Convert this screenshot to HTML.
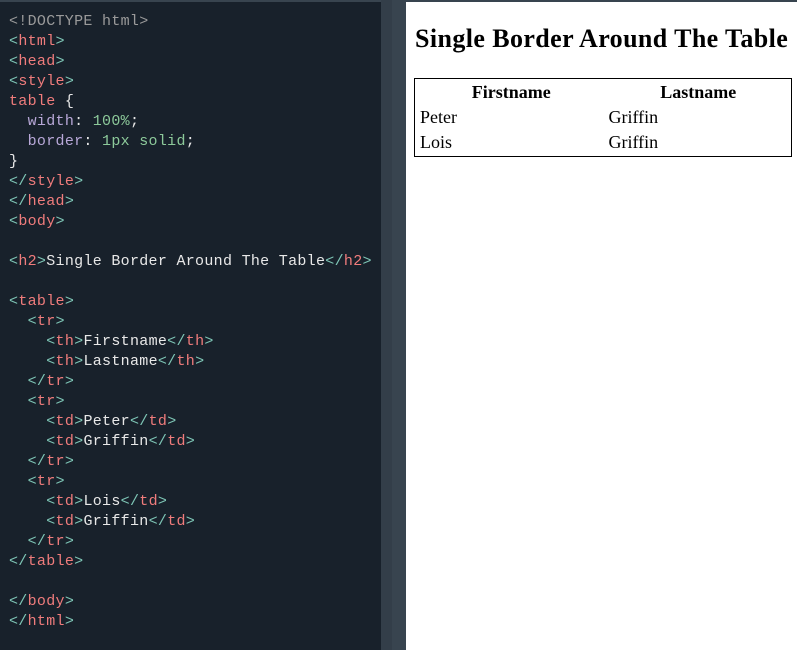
<!DOCTYPE html>
<html><head><style>
body{margin:0;width:797px;height:650px;overflow:hidden;background:#fff;position:relative}
#ed{position:absolute;left:0;top:2px;width:381px;height:648px;background:#18212b}
#top{position:absolute;left:0;top:0;width:797px;height:2px;background:#38444f}
#bar{position:absolute;left:381px;top:0;width:25px;height:650px;background:#38444f}
#bar2{position:absolute;left:381px;top:0;width:11px;height:650px;background:#333e49}
pre{margin:0;position:absolute;left:9px;top:12px;font:15px/20px "Liberation Mono",monospace;letter-spacing:0.3px;color:#e8e8e8}
.b{color:#7ec6b6}.t{color:#f07c7c}.g{color:#9a9a9a}.p{color:#b8a8d8}.v{color:#8cc99a}
#out{position:absolute;left:414px;top:0;width:378px;font-family:"Liberation Serif",serif}
h2{margin:25px 0 0;font-size:26px;line-height:28px;padding-left:1px;letter-spacing:0.4px;white-space:nowrap}
table{width:100%;border:1px solid #000;margin-top:25px;font-size:18px;border-spacing:2px}
th,td{padding:1px;line-height:21px}
td{text-align:left}
tr td:first-child{padding-left:3px}
</style></head><body>
<div id="top"></div><div id="ed"></div><div id="bar"></div><div id="bar2"></div>
<pre><span class="g">&lt;!DOCTYPE html&gt;</span>
<span class="b">&lt;</span><span class="t">html</span><span class="b">&gt;</span>
<span class="b">&lt;</span><span class="t">head</span><span class="b">&gt;</span>
<span class="b">&lt;</span><span class="t">style</span><span class="b">&gt;</span>
<span class="t">table</span> {
  <span class="p">width</span>: <span class="v">100%</span>;
  <span class="p">border</span>: <span class="v">1px solid</span>;
}
<span class="b">&lt;/</span><span class="t">style</span><span class="b">&gt;</span>
<span class="b">&lt;/</span><span class="t">head</span><span class="b">&gt;</span>
<span class="b">&lt;</span><span class="t">body</span><span class="b">&gt;</span>

<span class="b">&lt;</span><span class="t">h2</span><span class="b">&gt;</span>Single Border Around The Table<span class="b">&lt;/</span><span class="t">h2</span><span class="b">&gt;</span>

<span class="b">&lt;</span><span class="t">table</span><span class="b">&gt;</span>
  <span class="b">&lt;</span><span class="t">tr</span><span class="b">&gt;</span>
    <span class="b">&lt;</span><span class="t">th</span><span class="b">&gt;</span>Firstname<span class="b">&lt;/</span><span class="t">th</span><span class="b">&gt;</span>
    <span class="b">&lt;</span><span class="t">th</span><span class="b">&gt;</span>Lastname<span class="b">&lt;/</span><span class="t">th</span><span class="b">&gt;</span>
  <span class="b">&lt;/</span><span class="t">tr</span><span class="b">&gt;</span>
  <span class="b">&lt;</span><span class="t">tr</span><span class="b">&gt;</span>
    <span class="b">&lt;</span><span class="t">td</span><span class="b">&gt;</span>Peter<span class="b">&lt;/</span><span class="t">td</span><span class="b">&gt;</span>
    <span class="b">&lt;</span><span class="t">td</span><span class="b">&gt;</span>Griffin<span class="b">&lt;/</span><span class="t">td</span><span class="b">&gt;</span>
  <span class="b">&lt;/</span><span class="t">tr</span><span class="b">&gt;</span>
  <span class="b">&lt;</span><span class="t">tr</span><span class="b">&gt;</span>
    <span class="b">&lt;</span><span class="t">td</span><span class="b">&gt;</span>Lois<span class="b">&lt;/</span><span class="t">td</span><span class="b">&gt;</span>
    <span class="b">&lt;</span><span class="t">td</span><span class="b">&gt;</span>Griffin<span class="b">&lt;/</span><span class="t">td</span><span class="b">&gt;</span>
  <span class="b">&lt;/</span><span class="t">tr</span><span class="b">&gt;</span>
<span class="b">&lt;/</span><span class="t">table</span><span class="b">&gt;</span>

<span class="b">&lt;/</span><span class="t">body</span><span class="b">&gt;</span>
<span class="b">&lt;/</span><span class="t">html</span><span class="b">&gt;</span></pre>
<div id="out">
<h2>Single Border Around The Table</h2>
<table><tr><th>Firstname</th><th>Lastname</th></tr>
<tr><td>Peter</td><td>Griffin</td></tr>
<tr><td>Lois</td><td>Griffin</td></tr></table>
</div>
</body></html>
